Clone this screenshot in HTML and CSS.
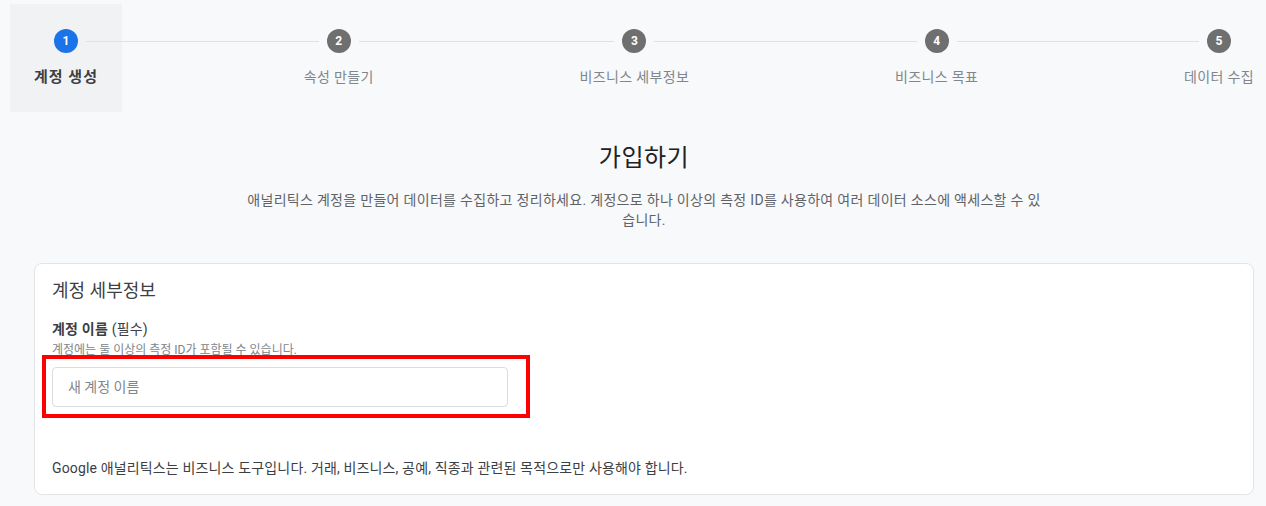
FILE: index.html
```html
<!DOCTYPE html>
<html lang="ko">
<head>
<meta charset="utf-8">
<title>가입하기</title>
<link rel="stylesheet" href="styles.css">
</head>
<body>
<div class="page">
  <nav class="stepper">
    <div class="step active first">
      <div class="step-top"><span class="seg"></span><span class="circle">1</span><span class="seg"></span></div>
      <div class="step-label">계정 생성</div>
    </div>
    <div class="connector"></div>
    <div class="step">
      <div class="step-top"><span class="seg"></span><span class="circle">2</span><span class="seg"></span></div>
      <div class="step-label">속성 만들기</div>
    </div>
    <div class="connector"></div>
    <div class="step">
      <div class="step-top"><span class="seg"></span><span class="circle">3</span><span class="seg"></span></div>
      <div class="step-label">비즈니스 세부정보</div>
    </div>
    <div class="connector"></div>
    <div class="step">
      <div class="step-top"><span class="seg"></span><span class="circle">4</span><span class="seg"></span></div>
      <div class="step-label">비즈니스 목표</div>
    </div>
    <div class="connector"></div>
    <div class="step last">
      <div class="step-top"><span class="seg"></span><span class="circle">5</span><span class="seg"></span></div>
      <div class="step-label">데이터 수집</div>
    </div>
  </nav>

  <main class="content">
    <h1 class="title">가입하기</h1>
    <p class="intro">애널리틱스 계정을 만들어 데이터를 수집하고 정리하세요. 계정으로 하나 이상의 측정 ID를 사용하여 여러 데이터 소스에 액세스할 수 있습니다.</p>

    <section class="card">
      <h2 class="card-title">계정 세부정보</h2>
      <div class="field">
        <div class="field-label"><span class="strong">계정 이름</span> (필수)</div>
        <div class="field-hint">계정에는 둘 이상의 측정 ID가 포함될 수 있습니다.</div>
        <div class="input-wrap">
          <input class="text-input" type="text" placeholder="새 계정 이름">
          <div class="highlight"></div>
        </div>
      </div>
      <p class="notice">Google 애널리틱스는 비즈니스 도구입니다. 거래, 비즈니스, 공예, 직종과 관련된 목적으로만 사용해야 합니다.</p>
    </section>
  </main>
</div>
</body>
</html>
```
FILE: styles.css
```css
* { box-sizing: border-box; }

html, body {
  margin: 0;
  padding: 0;
  background: #f8f9fa;
  overflow: hidden;
}

body {
  font-family: Roboto, "Noto Sans CJK KR", "Noto Sans", sans-serif;
  color: #3c4043;
}

.page {
  width: 1288px;
  padding-top: 4px;
}

/* ---------- stepper ---------- */
.stepper {
  display: flex;
  align-items: flex-start;
  margin: 0 10px;
}

.step {
  display: flex;
  flex-direction: column;
  align-items: stretch;
  padding: 25px 24px;
}

.step.active {
  background: #f1f2f3;
}

.step-top {
  display: flex;
  align-items: center;
  height: 24px;
}

.seg {
  flex: 1;
  height: 1px;
  background: #dfe1e3;
}

.seg:first-child { margin-right: 8px; margin-left: -24px; }
.seg:last-child { margin-left: 8px; margin-right: -24px; }

.first .seg:first-child,
.last .seg:last-child { background: transparent; }

.circle {
  width: 24px;
  height: 24px;
  border-radius: 50%;
  background: #6f6f6f;
  color: #fff;
  font-size: 12px;
  font-weight: 700;
  display: flex;
  align-items: center;
  justify-content: center;
  flex: none;
}

.active .circle {
  background: #1a73e8;
}

.step-label {
  margin-top: 14px;
  font-size: 14px;
  letter-spacing: 0.35px;
  line-height: 20px;
  color: #80868b;
  text-align: center;
  white-space: nowrap;
}

.active .step-label {
  font-size: 15px;
  letter-spacing: 1px;
  font-weight: 700;
  color: #3c4043;
}

.connector {
  flex: 1;
  height: 1px;
  background: #dfe1e3;
  margin-top: 37px;
}

/* ---------- content ---------- */
.content {
  margin: 0 34px;
  display: flex;
  flex-direction: column;
  align-items: center;
}

.title {
  margin: 30px 0 0;
  font-size: 24px;
  letter-spacing: 0.5px;
  line-height: 32px;
  font-weight: 400;
  color: #202124;
}

.intro {
  margin: 16px 0 0;
  max-width: 800px;
  font-size: 14px;
  letter-spacing: 0.3px;
  line-height: 20px;
  color: #5f6368;
  text-align: center;
}

.card {
  align-self: stretch;
  margin-top: 33px;
  background: #fff;
  border: 1px solid #e3e4e6;
  border-radius: 8px;
  padding: 15px 17px 16px;
}

.card-title {
  margin: 0;
  font-size: 18px;
  line-height: 24px;
  font-weight: 400;
  color: #3c4043;
}

.field {
  margin-top: 16px;
}

.field-label {
  font-size: 14px;
  letter-spacing: 0.2px;
  line-height: 20px;
  color: #3c4043;
}

.field-label .strong {
  font-weight: 700;
}

.field-hint {
  margin-top: 3px;
  font-size: 12px;
  line-height: 16px;
  color: #80868b;
}

.input-wrap {
  position: relative;
  margin-top: 9px;
  width: 456px;
}

.text-input {
  display: block;
  width: 456px;
  height: 40px;
  border: 1px solid #dadce0;
  border-radius: 4px;
  padding: 0 15px;
  font-family: inherit;
  font-size: 14px;
  color: #3c4043;
  background: #fff;
  outline: none;
}

.text-input::placeholder {
  color: #80868b;
}

.highlight {
  position: absolute;
  left: -10px;
  top: -12px;
  width: 488px;
  height: 63px;
  border: 4px solid #ff0000;
  pointer-events: none;
}

.notice {
  margin: 51px 0 0;
  font-size: 14px;
  letter-spacing: 0.15px;
  line-height: 20px;
  color: #3c4043;
}
```
